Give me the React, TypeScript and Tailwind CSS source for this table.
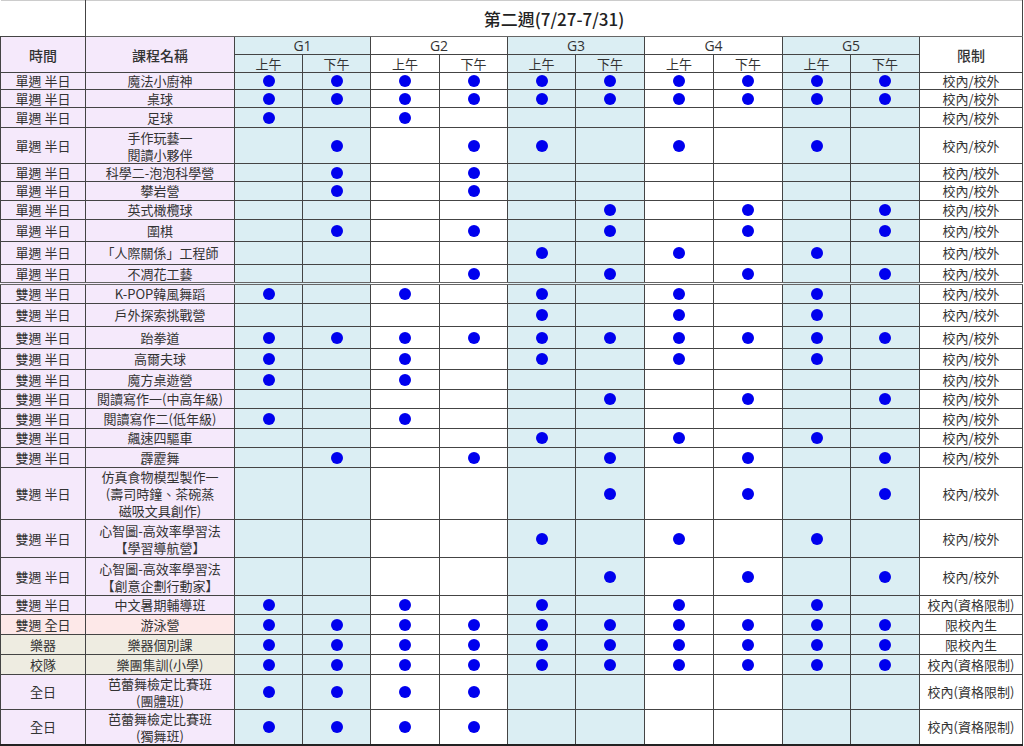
import React from "react"

type Row = {
  time: string
  name: string[]
  dots: number[]
  limit: string
  h: number
  tone?: "pink" | "tan"
  sep?: boolean
}

const ALL = [0, 1, 2, 3, 4, 5, 6, 7, 8, 9]
const AM = [0, 2, 4, 6, 8]
const PM = [1, 3, 5, 7, 9]

const ROWS: Row[] = [
  { time: "單週 半日", name: ["魔法小廚神"], dots: ALL, limit: "校內/校外", h: 17 },
  { time: "單週 半日", name: ["桌球"], dots: ALL, limit: "校內/校外", h: 18 },
  { time: "單週 半日", name: ["足球"], dots: [0, 2], limit: "校內/校外", h: 20 },
  { time: "單週 半日", name: ["手作玩藝一", "閱讀小夥伴"], dots: [1, 3, 4, 6, 8], limit: "校內/校外", h: 36 },
  { time: "單週 半日", name: ["科學二-泡泡科學營"], dots: [1, 3], limit: "校內/校外", h: 18 },
  { time: "單週 半日", name: ["攀岩營"], dots: [1, 3], limit: "校內/校外", h: 19 },
  { time: "單週 半日", name: ["英式橄欖球"], dots: [5, 7, 9], limit: "校內/校外", h: 19 },
  { time: "單週 半日", name: ["圍棋"], dots: PM, limit: "校內/校外", h: 22 },
  { time: "單週 半日", name: ["「人際關係」工程師"], dots: [4, 6, 8], limit: "校內/校外", h: 23 },
  { time: "單週 半日", name: ["不凋花工藝"], dots: [3, 5, 7, 9], limit: "校內/校外", h: 19, sep: true },
  { time: "雙週 半日", name: ["K-POP韓風舞蹈"], dots: AM, limit: "校內/校外", h: 20 },
  { time: "雙週 半日", name: ["戶外探索挑戰營"], dots: [4, 6, 8], limit: "校內/校外", h: 23 },
  { time: "雙週 半日", name: ["跆拳道"], dots: ALL, limit: "校內/校外", h: 22 },
  { time: "雙週 半日", name: ["高爾夫球"], dots: AM, limit: "校內/校外", h: 21 },
  { time: "雙週 半日", name: ["魔方桌遊營"], dots: [0, 2], limit: "校內/校外", h: 20 },
  { time: "雙週 半日", name: ["閱讀寫作一(中高年級)"], dots: [5, 7, 9], limit: "校內/校外", h: 19 },
  { time: "雙週 半日", name: ["閱讀寫作二(低年級)"], dots: [0, 2], limit: "校內/校外", h: 20 },
  { time: "雙週 半日", name: ["飆速四驅車"], dots: [4, 6, 8], limit: "校內/校外", h: 19 },
  { time: "雙週 半日", name: ["霹靂舞"], dots: PM, limit: "校內/校外", h: 20 },
  { time: "雙週 半日", name: ["仿真食物模型製作一", "(壽司時鐘、茶碗蒸", "磁吸文具創作)"], dots: [5, 7, 9], limit: "校內/校外", h: 51 },
  { time: "雙週 半日", name: ["心智圖-高效率學習法", "【學習導航營】"], dots: [4, 6, 8], limit: "校內/校外", h: 38 },
  { time: "雙週 半日", name: ["心智圖-高效率學習法", "【創意企劃行動家】"], dots: [5, 7, 9], limit: "校內/校外", h: 38 },
  { time: "雙週 半日", name: ["中文暑期輔導班"], dots: AM, limit: "校內(資格限制)", h: 19 },
  { time: "雙週 全日", name: ["游泳營"], dots: ALL, limit: "限校內生", h: 20, tone: "pink" },
  { time: "樂器", name: ["樂器個別課"], dots: ALL, limit: "限校內生", h: 20, tone: "tan" },
  { time: "校隊", name: ["樂團集訓(小學)"], dots: ALL, limit: "校內(資格限制)", h: 20, tone: "tan" },
  { time: "全日", name: ["芭蕾舞檢定比賽班", "(團體班)"], dots: [0, 1, 2, 3], limit: "校內(資格限制)", h: 35 },
  { time: "全日", name: ["芭蕾舞檢定比賽班", "(獨舞班)"], dots: [0, 1, 2, 3], limit: "校內(資格限制)", h: 34 },
]

const GROUPS = ["G1", "G2", "G3", "G4", "G5"]
// G1, G3, G5 columns are shaded
const shaded = (col: number) => Math.floor(col / 2) % 2 === 0

function Dot() {
  return <span className="block mx-auto w-3 h-3 rounded-full bg-[#0000ee]" />
}

export default function App() {
  const cell = "border border-[#444] p-0 text-center align-middle"
  return (
    <div
      className="w-[1024px] h-[746px] bg-white overflow-hidden text-[#333] text-[13px] leading-[14px]"
      style={{ fontFamily: '"Noto Sans CJK TC", "Noto Sans", sans-serif' }}
    >
      <table className="table-fixed border-collapse w-[1022px]">
        <colgroup>
          <col className="w-[85px]" />
          <col className="w-[149px]" />
          <col className="w-[68px]" />
          <col className="w-[68px]" />
          <col className="w-[69px]" />
          <col className="w-[68px]" />
          <col className="w-[68px]" />
          <col className="w-[69px]" />
          <col className="w-[69px]" />
          <col className="w-[69px]" />
          <col className="w-[68px]" />
          <col className="w-[69px]" />
          <col className="w-[103px]" />
        </colgroup>
        <tbody>
          {/* Title */}
          <tr className="h-[36px]">
            <td className="border-t border-t-[#ccc] border-r border-r-[#444] bg-white" />
            <td
              colSpan={12}
              className="border-t border-t-[#ccc] border-r border-r-[#444] border-b border-b-[#666] text-center text-[17px] leading-[20px] font-medium text-[#222]"
            >
              第二週(7/27-7/31)
            </td>
          </tr>

          {/* Group headers */}
          <tr className="h-[18px]">
            <td rowSpan={2} className={`${cell} bg-[#f5e9fb] text-[14px] font-medium`}>
              時間
            </td>
            <td rowSpan={2} className={`${cell} bg-[#f5e9fb] text-[14px] font-medium`}>
              課程名稱
            </td>
            {GROUPS.map((g, i) => (
              <td
                key={g}
                colSpan={2}
                className={`${cell} text-[14px] leading-[15px] ${i % 2 === 0 ? "bg-[#dbeef3]" : "bg-white"}`}
                style={{ fontFamily: '"Open Sans", "Noto Sans", sans-serif' }}
              >
                {g}
              </td>
            ))}
            <td rowSpan={2} className={`${cell} bg-white text-[14px] font-medium`}>
              限制
            </td>
          </tr>
          <tr className="h-[18px]">
            {ALL.map((c) => (
              <td key={c} className={`${cell} ${shaded(c) ? "bg-[#dbeef3]" : "bg-white"}`}>
                {c % 2 === 0 ? "上午" : "下午"}
              </td>
            ))}
          </tr>

          {/* Courses */}
          {ROWS.map((r, i) => {
            const left =
              r.tone === "pink" ? "bg-[#fde8e8]" : r.tone === "tan" ? "bg-[#eeece1]" : "bg-[#f5e9fb]"
            const last = i === ROWS.length - 1
            const edge = r.sep
              ? "border-b-[3px] border-b-[#666] border-double"
              : last
                ? "border-b-2 border-b-[#222]"
                : ""
            return (
              <tr key={i} style={{ height: r.h }}>
                <td className={`${cell} ${left} ${edge}`}>{r.time}</td>
                <td className={`${cell} ${left} ${edge} ${r.name.length > 1 ? "leading-[17px]" : ""}`}>
                  {r.name.map((n) => (
                    <div key={n}>{n}</div>
                  ))}
                </td>
                {ALL.map((c) => (
                  <td key={c} className={`${cell} ${edge} ${shaded(c) ? "bg-[#dbeef3]" : "bg-white"}`}>
                    {r.dots.includes(c) && <Dot />}
                  </td>
                ))}
                <td className={`${cell} ${edge} bg-white`}>{r.limit}</td>
              </tr>
            )
          })}
        </tbody>
      </table>
    </div>
  )
}
